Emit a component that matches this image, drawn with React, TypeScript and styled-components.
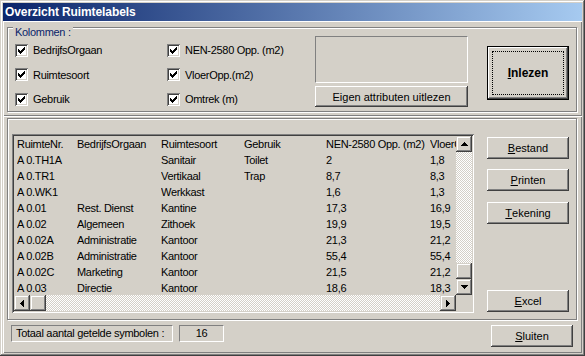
import styled, { createGlobalStyle } from "styled-components";

const FACE = "#d4d0c8";

const GlobalStyle = createGlobalStyle`
  html, body {
    margin: 0;
    padding: 0;
    background: ${FACE};
  }
  body {
    font-family: "Liberation Sans", Arial, sans-serif;
    font-size: 11px;
    letter-spacing: -0.3px;
    color: #000;
  }
  * {
    box-sizing: border-box;
  }
`;

const Window = styled.div`
  width: 585px;
  height: 356px;
  padding: 3px;
  background: ${FACE};
  display: flex;
  flex-direction: column;
  overflow: hidden;
  box-shadow: inset -1px -1px #404040, inset 1px 1px ${FACE},
    inset -2px -2px #808080, inset 2px 2px #fff;
`;

const TitleBar = styled.div`
  height: 18px;
  flex: none;
  padding-left: 2px;
  display: flex;
  align-items: center;
  background: linear-gradient(to right, #0a246a, #a6caf0);
  color: #fff;
  font-weight: 700;
  font-size: 12px;
  letter-spacing: -0.1px;
`;

const Panel = styled.div<{ $h: number; $pt: number }>`
  height: ${(p) => p.$h}px;
  flex: none;
  padding: ${(p) => p.$pt}px 4px 0 4px;
  display: flex;
  flex-direction: column;
  box-shadow: inset 1px 1px #fff, inset -1px -1px #808080;
`;

const GroupBox = styled.div<{ $h: number }>`
  position: relative;
  width: 570px;
  height: ${(p) => p.$h}px;
  flex: none;
  display: flex;
  align-items: flex-start;
  border: 1px solid #808080;
  box-shadow: inset 1px 1px #fff, 1px 1px #fff;
`;

const Legend = styled.span`
  position: absolute;
  top: -2px;
  left: 5px;
  padding: 0 2px;
  line-height: 13px;
  background: ${FACE};
  color: #0a246a;
`;

const CheckGrid = styled.div`
  width: 300px;
  margin-left: 7px;
  padding-top: 10px;
  display: grid;
  grid-template-columns: 152px 148px;
  grid-template-rows: repeat(3, 24.5px);
  grid-auto-flow: column;
`;

const CheckItem = styled.label`
  display: flex;
  align-items: center;
  gap: 5px;
  white-space: nowrap;
`;

const CheckBox = styled.span`
  width: 13px;
  height: 13px;
  flex: none;
  background: #fff;
  box-shadow: inset 1px 1px #808080, inset -1px -1px #fff,
    inset 2px 2px #404040, inset -2px -2px ${FACE};
  display: flex;
`;

const MiddleColumn = styled.div`
  width: 153px;
  margin-top: 8px;
  display: flex;
  flex-direction: column;
  gap: 3px;
`;

const StaticBox = styled.div`
  height: 47px;
  border-top: 1px solid #808080;
  border-left: 1px solid #808080;
  border-bottom: 1px solid #fff;
  border-right: 1px solid #fff;
`;

const Button = styled.button<{ $w?: number; $h?: number }>`
  width: ${(p) => p.$w ?? 82}px;
  height: ${(p) => p.$h ?? 22}px;
  flex: none;
  padding: 0;
  border: 0;
  background: ${FACE};
  font: inherit;
  color: #000;
  display: flex;
  align-items: center;
  justify-content: center;
  box-shadow: inset -1px -1px #404040, inset 1px 1px #fff,
    inset -2px -2px #808080, inset 2px 2px ${FACE};
`;

const DefaultButton = styled(Button)`
  margin-left: 19px;
  margin-top: 18px;
  padding: 4px;
  border: 1px solid #000;
  font-weight: 700;
  font-size: 12px;
  letter-spacing: 0;
`;

const FocusRect = styled.span`
  flex: 1;
  align-self: stretch;
  display: flex;
  align-items: center;
  justify-content: center;
  border: 1px dotted #000;
`;

const ListArea = styled.div`
  display: flex;
  align-items: flex-start;
  padding: 15px 0 0 4px;
`;

const ListBox = styled.div`
  width: 462px;
  height: 179px;
  padding: 2px;
  display: grid;
  grid-template-columns: 1fr 16px;
  grid-template-rows: 1fr 16px;
  box-shadow: inset 1px 1px #808080, inset -1px -1px #fff,
    inset 2px 2px #404040, inset -2px -2px ${FACE};
`;

const Rows = styled.div`
  overflow: hidden;
  padding-left: 3px;
`;

const Row = styled.div`
  height: 16px;
  line-height: 16px;
  display: grid;
  grid-template-columns: 60px 84px 83px 82px 104px 80px;
  white-space: nowrap;
`;

const Cell = styled.span`
  overflow: hidden;
`;

const VScroll = styled.div`
  display: flex;
  flex-direction: column;
`;

const HScroll = styled.div`
  display: flex;
`;

const Track = styled.div<{ $end?: boolean }>`
  flex: 1;
  display: flex;
  flex-direction: ${(p) => (p.$end ? "column" : "row")};
  justify-content: ${(p) => (p.$end ? "flex-end" : "flex-start")};
  background: repeating-conic-gradient(#fff 0 25%, ${FACE} 0 50%) 0 0 / 2px 2px;
`;

const ScrollPart = styled.div`
  width: 16px;
  height: 16px;
  flex: none;
  background: ${FACE};
  display: flex;
  align-items: center;
  justify-content: center;
  box-shadow: inset -1px -1px #404040, inset 1px 1px ${FACE},
    inset -2px -2px #808080, inset 2px 2px #fff;
`;

const Corner = styled.div`
  background: ${FACE};
`;

const ButtonColumn = styled.div`
  height: 178px;
  margin-left: 13px;
  padding-top: 3px;
  display: flex;
  flex-direction: column;
`;

const SideButton = styled(Button)<{ $gap?: number }>`
  margin-top: ${(p) => p.$gap ?? 0}px;
`;

const ExcelButton = styled(Button)`
  margin-top: auto;
`;

const StatusRow = styled.div`
  margin-top: 5px;
  display: flex;
  align-items: flex-start;
`;

const StatusBox = styled.div<{ $w: number; $center?: boolean }>`
  width: ${(p) => p.$w}px;
  height: 17px;
  line-height: 15px;
  padding-left: ${(p) => (p.$center ? 0 : 4)}px;
  text-align: ${(p) => (p.$center ? "center" : "left")};
  border-top: 1px solid #808080;
  border-left: 1px solid #808080;
  border-bottom: 1px solid #fff;
  border-right: 1px solid #fff;
`;

const LabelBox = styled(StatusBox)`
  margin-left: 4px;
`;

const CountBox = styled(StatusBox)`
  margin-left: 6px;
`;

const CloseButton = styled(Button)`
  margin-left: auto;
  margin-right: 5px;
`;

function Check() {
  const cols = [5, 6, 7, 6, 5, 4, 3];
  return (
    <svg width="13" height="13" viewBox="0 0 13 13" shapeRendering="crispEdges">
      {cols.map((y, i) => (
        <rect key={i} x={3 + i} y={y} width="1" height="3" fill="#000" />
      ))}
    </svg>
  );
}

type Dir = "up" | "down" | "left" | "right";

function Arrow({ dir }: { dir: Dir }) {
  const steps = [1, 3, 5, 7];
  const vertical = dir === "up" || dir === "down";
  return (
    <svg
      width={vertical ? 7 : 4}
      height={vertical ? 4 : 7}
      shapeRendering="crispEdges"
    >
      {steps.map((len, i) => {
        const off = (7 - len) / 2;
        if (dir === "up") return <rect key={i} x={off} y={i} width={len} height="1" />;
        if (dir === "down") return <rect key={i} x={off} y={3 - i} width={len} height="1" />;
        if (dir === "left") return <rect key={i} x={i} y={off} width="1" height={len} />;
        return <rect key={i} x={3 - i} y={off} width="1" height={len} />;
      })}
    </svg>
  );
}

const checks = [
  "BedrijfsOrgaan",
  "Ruimtesoort",
  "Gebruik",
  "NEN-2580 Opp. (m2)",
  "VloerOpp.(m2)",
  "Omtrek (m)",
];

const rows: string[][] = [
  ["RuimteNr.", "BedrijfsOrgaan", "Ruimtesoort", "Gebruik", "NEN-2580 Opp. (m2)", "VloerOpp.(m2)"],
  ["A 0.TH1A", "", "Sanitair", "Toilet", "2", "1,8"],
  ["A 0.TR1", "", "Vertikaal", "Trap", "8,7", "8,3"],
  ["A 0.WK1", "", "Werkkast", "", "1,6", "1,3"],
  ["A 0.01", "Rest. Dienst", "Kantine", "", "17,3", "16,9"],
  ["A 0.02", "Algemeen", "Zithoek", "", "19,9", "19,5"],
  ["A 0.02A", "Administratie", "Kantoor", "", "21,3", "21,2"],
  ["A 0.02B", "Administratie", "Kantoor", "", "55,4", "55,4"],
  ["A 0.02C", "Marketing", "Kantoor", "", "21,5", "21,2"],
  ["A 0.03", "Directie", "Kantoor", "", "18,6", "18,3"],
];

export default function App() {
  return (
    <>
      <GlobalStyle />
      <Window>
        <TitleBar>Overzicht Ruimtelabels</TitleBar>

        <Panel $h={95} $pt={6}>
          <GroupBox $h={85}>
            <Legend>Kolommen :</Legend>
            <CheckGrid>
              {checks.map((c) => (
                <CheckItem key={c}>
                  <CheckBox>
                    <Check />
                  </CheckBox>
                  {c}
                </CheckItem>
              ))}
            </CheckGrid>
            <MiddleColumn>
              <StaticBox />
              <Button $w={153} $h={21}>
                Eigen attributen uitlezen
              </Button>
            </MiddleColumn>
            <DefaultButton $w={82} $h={54}>
              <FocusRect>
                <u>I</u>nlezen
              </FocusRect>
            </DefaultButton>
          </GroupBox>
        </Panel>

        <Panel $h={237} $pt={2}>
          <GroupBox $h={202}>
            <ListArea>
              <ListBox>
                <Rows>
                  {rows.map((r, i) => (
                    <Row key={i}>
                      {r.map((c, j) => (
                        <Cell key={j}>{c}</Cell>
                      ))}
                    </Row>
                  ))}
                </Rows>
                <VScroll>
                  <ScrollPart>
                    <Arrow dir="up" />
                  </ScrollPart>
                  <Track $end>
                    <ScrollPart />
                  </Track>
                  <ScrollPart>
                    <Arrow dir="down" />
                  </ScrollPart>
                </VScroll>
                <HScroll>
                  <ScrollPart>
                    <Arrow dir="left" />
                  </ScrollPart>
                  <Track>
                    <ScrollPart />
                  </Track>
                  <ScrollPart>
                    <Arrow dir="right" />
                  </ScrollPart>
                </HScroll>
                <Corner />
              </ListBox>
              <ButtonColumn>
                <SideButton>
                  <u>B</u>estand
                </SideButton>
                <SideButton $gap={10}>
                  <u>P</u>rinten
                </SideButton>
                <SideButton $gap={11}>
                  <u>T</u>ekening
                </SideButton>
                <ExcelButton>
                  <u>E</u>xcel
                </ExcelButton>
              </ButtonColumn>
            </ListArea>
          </GroupBox>
          <StatusRow>
            <LabelBox $w={162}>Totaal aantal getelde symbolen :</LabelBox>
            <CountBox $w={45} $center>
              16
            </CountBox>
            <CloseButton>
              <u>S</u>luiten
            </CloseButton>
          </StatusRow>
        </Panel>
      </Window>
    </>
  );
}
